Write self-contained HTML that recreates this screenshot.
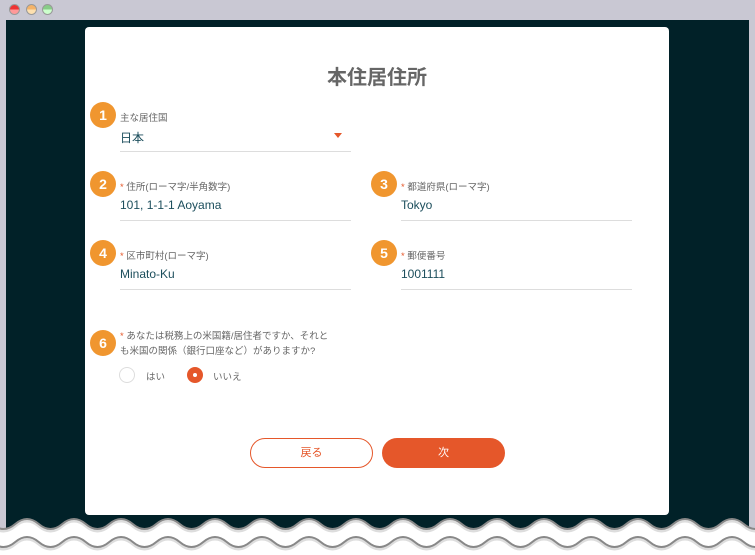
<!DOCTYPE html>
<html><head><meta charset="utf-8"><style>
*{margin:0;padding:0;box-sizing:border-box}
body{width:755px;height:555px;overflow:hidden;background:#fff;position:relative;font-family:"Liberation Sans","Noto Sans CJK JP",sans-serif}
.top{position:absolute;left:0;top:0;width:755px;height:530px;background:#c9c8d3}
.dark{position:absolute;left:6px;top:20px;width:743px;height:510px;background:#012128}
.dot{position:absolute;top:4px;width:11px;height:11px;border-radius:50%;border:1px solid #999}
.card{position:absolute;left:85px;top:27px;width:584px;height:488px;background:#fff;border-radius:4px}
.abs{position:absolute}
.c{position:absolute;width:26px;height:26px;border-radius:50%;background:#f0962f;color:#fff;font-weight:bold;font-size:14px;text-align:center;line-height:26px}
.lbl{position:absolute;font-size:9.5px;color:#666}
.lbl b{color:#e5572a;font-weight:normal}
.val{position:absolute;font-size:12px;color:#1c4e5c}
.ln{position:absolute;height:1px;background:#ddd}
</style></head><body>
<div class="top"></div>
<div class="dot" style="left:9px;background:linear-gradient(#e33 50%,#f99 50%)"></div>
<div class="dot" style="left:26px;background:linear-gradient(#f4b36a 50%,#fde0b0 50%)"></div>
<div class="dot" style="left:42px;background:linear-gradient(#8c8 50%,#cfc 50%)"></div>
<div class="dark"></div>
<div class="card"></div>
<svg class="abs" style="left:0;top:510px" width="755" height="45">
<path d="M-31.75 14 q11.75 -10 23.5 0 t23.5 0 t23.5 0 t23.5 0 t23.5 0 t23.5 0 t23.5 0 t23.5 0 t23.5 0 t23.5 0 t23.5 0 t23.5 0 t23.5 0 t23.5 0 t23.5 0 t23.5 0 t23.5 0 t23.5 0 t23.5 0 t23.5 0 t23.5 0 t23.5 0 t23.5 0 t23.5 0 t23.5 0 t23.5 0 t23.5 0 t23.5 0 t23.5 0 t23.5 0 t23.5 0 t23.5 0 t23.5 0 t23.5 0 t23.5 0 t23.5 0 L800 50 L-40 50Z" fill="#fff"/>
<path d="M-31.75 16 q11.75 -10 23.5 0 t23.5 0 t23.5 0 t23.5 0 t23.5 0 t23.5 0 t23.5 0 t23.5 0 t23.5 0 t23.5 0 t23.5 0 t23.5 0 t23.5 0 t23.5 0 t23.5 0 t23.5 0 t23.5 0 t23.5 0 t23.5 0 t23.5 0 t23.5 0 t23.5 0 t23.5 0 t23.5 0 t23.5 0 t23.5 0 t23.5 0 t23.5 0 t23.5 0 t23.5 0 t23.5 0 t23.5 0 t23.5 0 t23.5 0 t23.5 0 t23.5 0" fill="none" stroke="#ddd" stroke-width="3"/>
<path d="M-31.75 14 q11.75 -10 23.5 0 t23.5 0 t23.5 0 t23.5 0 t23.5 0 t23.5 0 t23.5 0 t23.5 0 t23.5 0 t23.5 0 t23.5 0 t23.5 0 t23.5 0 t23.5 0 t23.5 0 t23.5 0 t23.5 0 t23.5 0 t23.5 0 t23.5 0 t23.5 0 t23.5 0 t23.5 0 t23.5 0 t23.5 0 t23.5 0 t23.5 0 t23.5 0 t23.5 0 t23.5 0 t23.5 0 t23.5 0 t23.5 0 t23.5 0 t23.5 0 t23.5 0" fill="none" stroke="#888" stroke-width="2"/>
<path d="M-31.75 34 q11.75 -10 23.5 0 t23.5 0 t23.5 0 t23.5 0 t23.5 0 t23.5 0 t23.5 0 t23.5 0 t23.5 0 t23.5 0 t23.5 0 t23.5 0 t23.5 0 t23.5 0 t23.5 0 t23.5 0 t23.5 0 t23.5 0 t23.5 0 t23.5 0 t23.5 0 t23.5 0 t23.5 0 t23.5 0 t23.5 0 t23.5 0 t23.5 0 t23.5 0 t23.5 0 t23.5 0 t23.5 0 t23.5 0 t23.5 0 t23.5 0 t23.5 0 t23.5 0" fill="none" stroke="#ddd" stroke-width="3"/>
<path d="M-31.75 32 q11.75 -10 23.5 0 t23.5 0 t23.5 0 t23.5 0 t23.5 0 t23.5 0 t23.5 0 t23.5 0 t23.5 0 t23.5 0 t23.5 0 t23.5 0 t23.5 0 t23.5 0 t23.5 0 t23.5 0 t23.5 0 t23.5 0 t23.5 0 t23.5 0 t23.5 0 t23.5 0 t23.5 0 t23.5 0 t23.5 0 t23.5 0 t23.5 0 t23.5 0 t23.5 0 t23.5 0 t23.5 0 t23.5 0 t23.5 0 t23.5 0 t23.5 0 t23.5 0" fill="none" stroke="#888" stroke-width="2"/>
</svg>
<div class="abs" style="left:85px;width:584px;top:61px;text-align:center;font-size:20px;font-weight:bold;color:#666">本住居住所</div>

<div class="c" style="left:90px;top:102px">1</div>
<div class="lbl" style="left:120px;top:110px">主な居住国</div>
<div class="val" style="left:120px;top:129px">日本</div>
<div class="abs" style="left:334px;top:133px;width:0;height:0;border-left:4px solid transparent;border-right:4px solid transparent;border-top:5px solid #e5572a"></div>
<div class="ln" style="left:120px;top:151px;width:231px"></div>

<div class="c" style="left:90px;top:171px">2</div>
<div class="lbl" style="left:120px;top:179px"><b>*</b> 住所(ローマ字/半角数字)</div>
<div class="val" style="left:120px;top:198px">101, 1-1-1 Aoyama</div>
<div class="ln" style="left:120px;top:220px;width:231px"></div>

<div class="c" style="left:371px;top:171px">3</div>
<div class="lbl" style="left:401px;top:179px"><b>*</b> 都道府県(ローマ字)</div>
<div class="val" style="left:401px;top:198px">Tokyo</div>
<div class="ln" style="left:401px;top:220px;width:231px"></div>

<div class="c" style="left:90px;top:240px">4</div>
<div class="lbl" style="left:120px;top:248px"><b>*</b> 区市町村(ローマ字)</div>
<div class="val" style="left:120px;top:267px">Minato-Ku</div>
<div class="ln" style="left:120px;top:289px;width:231px"></div>

<div class="c" style="left:371px;top:240px">5</div>
<div class="lbl" style="left:401px;top:248px"><b>*</b> 郵便番号</div>
<div class="val" style="left:401px;top:267px">1001111</div>
<div class="ln" style="left:401px;top:289px;width:231px"></div>

<div class="c" style="left:90px;top:330px">6</div>
<div class="lbl" style="left:120px;top:329px;line-height:15px;width:240px"><b>*</b> あなたは税務上の米国籍/居住者ですか、それと<br>も米国の関係（銀行口座など）がありますか?</div>
<div class="abs" style="left:119px;top:367px;width:16px;height:16px;border-radius:50%;border:1px solid #ddd"></div>
<div class="lbl" style="left:146px;top:369px">はい</div>
<div class="abs" style="left:187px;top:367px;width:16px;height:16px;border-radius:50%;background:#e5572a"></div>
<div class="abs" style="left:193px;top:373px;width:4px;height:4px;border-radius:50%;background:#fff"></div>
<div class="lbl" style="left:213px;top:369px">いいえ</div>

<div class="abs" style="left:250px;top:438px;width:123px;height:30px;border:1px solid #e5572a;border-radius:15px;color:#e5572a;font-size:11px;text-align:center;line-height:28px">戻る</div>
<div class="abs" style="left:382px;top:438px;width:123px;height:30px;background:#e5572a;border-radius:15px;color:#fff;font-size:11px;text-align:center;line-height:30px">次</div>
</body></html>
